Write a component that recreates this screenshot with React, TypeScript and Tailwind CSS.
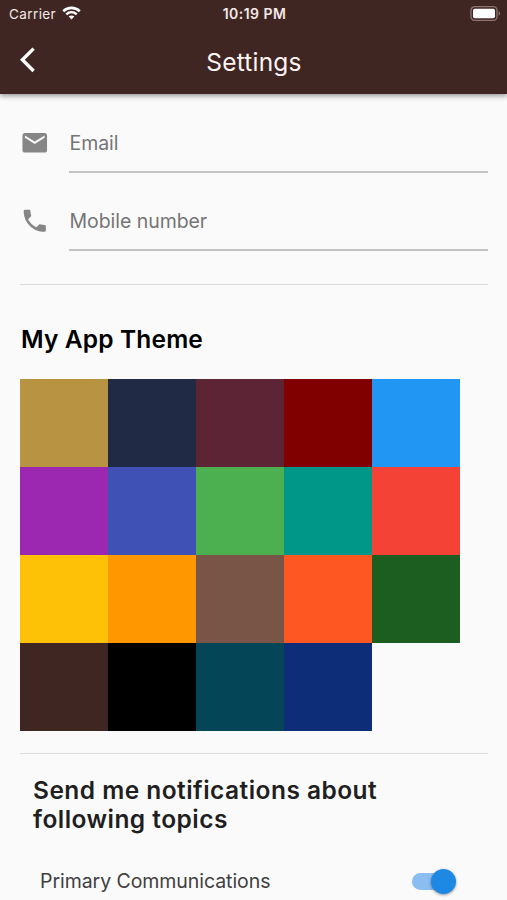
const swatches = [
  'bg-[#b89342]', 'bg-[#202a44]', 'bg-[#5c2434]', 'bg-[#800000]', 'bg-[#2196f3]',
  'bg-[#9c27b0]', 'bg-[#3f51b5]', 'bg-[#4caf50]', 'bg-[#009688]', 'bg-[#f44336]',
  'bg-[#ffc107]', 'bg-[#ff9800]', 'bg-[#795548]', 'bg-[#ff5722]', 'bg-[#1b5e20]',
  'bg-[#402623]', 'bg-black', 'bg-[#044658]', 'bg-[#0d2d78]',
];

function StatusBar() {
  return (
    <div className="grid h-7 grid-cols-[1fr_auto_1fr] items-center pl-[9px] pr-[6px] text-[13.5px] leading-7 text-[#f3e9e6]">
      <div className="flex items-center gap-[5.5px]">
        <span className="tracking-[0.4px]">Carrier</span>
        <svg className="-mt-[2px]" width="19" height="14" viewBox="0 0 19 14" fill="none" stroke="#fff" strokeWidth="2.6">
          <path d="M1.2 5.2C6 0.8 13 0.8 17.8 5.2" />
          <path d="M4.3 8.4C7.4 5.6 11.6 5.6 14.7 8.4" strokeWidth="2.4" />
          <path d="M9.5 13.4L6.7 10.6C8.3 9.2 10.7 9.2 12.3 10.6Z" fill="#fff" stroke="none" />
        </svg>
      </div>
      <span className="-ml-[1px] text-center text-[14px] font-semibold tracking-[0.45px]">10:19 PM</span>
      <svg className="-mt-[2px] justify-self-end" width="31" height="15" viewBox="0 0 31 15">
        <rect x="1" y="0.7" width="26" height="13.6" rx="3.6" fill="none" stroke="#8b7471" strokeWidth="1.3" />
        <rect x="3" y="2.7" width="22" height="9.6" rx="1.8" fill="#fff" />
        <path d="M28.6 5.3C30.7 6 30.7 9 28.6 9.7Z" fill="#8b7471" />
      </svg>
    </div>
  );
}

function Header() {
  return (
    <header className="h-[94px] bg-[#402623] shadow-[0_2px_5px_rgba(0,0,0,0.4)]">
      <StatusBar />
      <div className="grid h-[66px] grid-cols-[60px_1fr_60px] items-center">
        <svg className="mb-[3px] ml-[20px]" width="16" height="26" viewBox="0 0 16 26" fill="none" stroke="#fff" strokeWidth="3.4">
          <path d="M13.6 1.6L2.4 12.8L13.6 24" />
        </svg>
        <h1 className="ml-[1px] mt-[3px] text-center text-[24.5px] tracking-[0.2px] text-[#fdf5f2]">Settings</h1>
      </div>
    </header>
  );
}

const mailPath = 'M20 4H4c-1.1 0-1.99.9-1.99 2L2 18c0 1.1.9 2 2 2h16c1.1 0 2-.9 2-2V6c0-1.1-.9-2-2-2zm0 4l-8 5-8-5V6l8 5 8-5v2z';
const phonePath =
  'M6.62 10.79c1.44 2.83 3.76 5.14 6.59 6.59l2.2-2.2c.27-.27.67-.36 1.02-.24 1.12.37 2.33.57 3.57.57.55 0 1 .45 1 1V20c0 .55-.45 1-1 1-9.39 0-17-7.61-17-17 0-.55.45-1 1-1h3.5c.55 0 1 .45 1 1 0 1.25.2 2.45.57 3.57.11.35.03.74-.25 1.02l-2.2 2.2z';

function Field({ icon, label }: { icon: string; label: string }) {
  return (
    <div className="flex h-[78px]">
      <svg className="ml-[0.3px] mt-[14px]" width="29.5" height="29.5" viewBox="0 0 24 24" fill="#868686">
        <path d={icon} />
      </svg>
      <div className="ml-[19.2px] h-[59px] flex-1 border-b-2 border-[#c2c2c2] pl-[0.5px] pt-[14px] text-[19.5px] leading-[30px] tracking-[-0.05px] text-[#757575]">
        {label}
      </div>
    </div>
  );
}

function Switch() {
  return (
    <div className="flex h-[17px] w-[43px] items-center justify-end rounded-full bg-[#8bbdf0]">
      <div className="-mr-[1px] h-[25px] w-[25px] shrink-0 rounded-full bg-[#1e88e5] shadow-[0_1px_3px_rgba(0,0,0,0.4)]" />
    </div>
  );
}

export default function App() {
  return (
    <div className="h-[900px] w-[507px] overflow-hidden bg-[#fafafa] font-['Inter',sans-serif]">
      <Header />
      <main className="pl-[20px] pr-[19px] pt-5">
        <Field icon={mailPath} label="Email" />
        <Field icon={phonePath} label="Mobile number" />
        <div className="mt-[14px] h-px bg-[#dcdcdc]" />
        <h2 className="ml-[1px] mt-[39px] h-[55px] text-[24.5px] font-semibold leading-[30px] tracking-[0.15px] text-black">My App Theme</h2>
        <div className="grid w-[440px] grid-cols-5">
          {swatches.map((color) => (
            <div key={color} className={`h-[88px] ${color}`} />
          ))}
        </div>
        <div className="mt-[22px] h-px bg-[#dedede]" />
        <h2 className="ml-[13px] mt-[22px] text-[24.5px] font-semibold leading-[29px] tracking-[0.46px] text-[#1f1f1f]">
          Send me notifications about
          <br />
          following topics
        </h2>
        <div className="ml-[20px] mr-[33px] mt-[32px] flex items-center justify-between">
          <span className="text-[19.5px] leading-[30px] tracking-[-0.06px] text-[#404040]">Primary Communications</span>
          <Switch />
        </div>
      </main>
    </div>
  );
}
